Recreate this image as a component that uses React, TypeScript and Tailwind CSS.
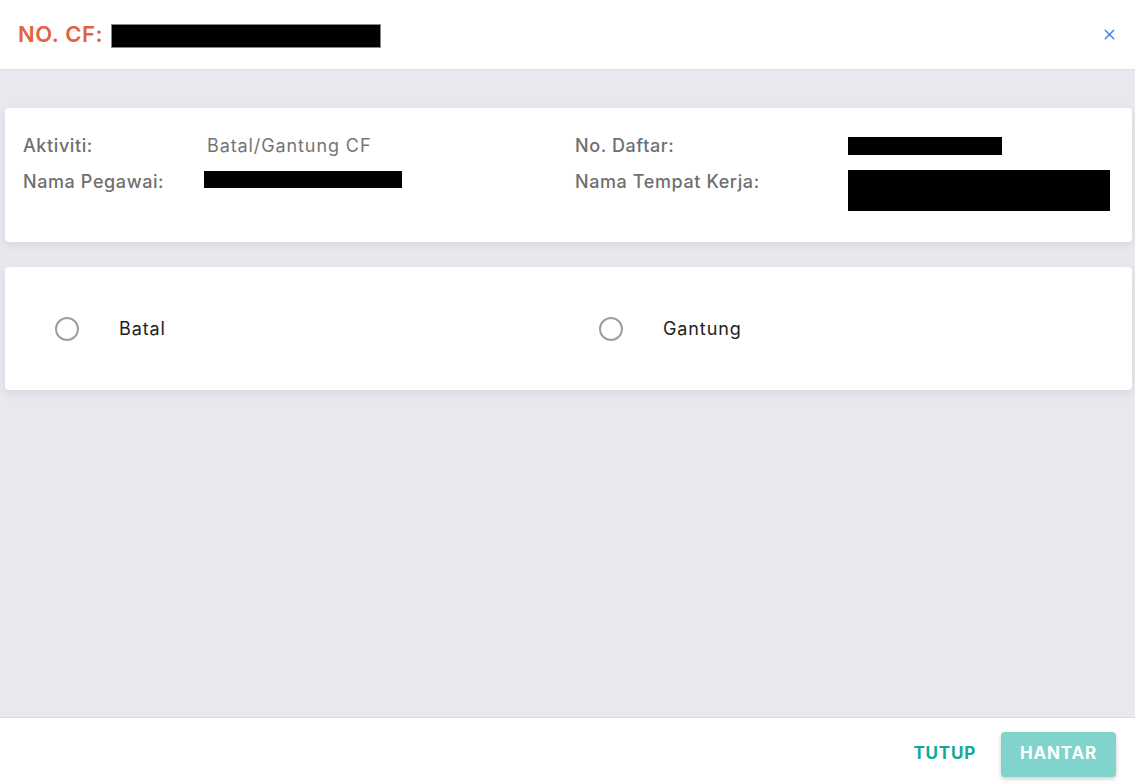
import { X } from "lucide-react";

const font = { fontFamily: 'Inter, "Noto Sans", "Liberation Sans", sans-serif' };

function Redacted({ className }: { className: string }) {
  return <span className={`block bg-black ${className}`} />;
}

function Label({ width, children }: { width: string; children: React.ReactNode }) {
  return (
    <div className={`shrink-0 text-[18px] font-medium leading-[24px] tracking-[0.6px] text-[#6f6f6f] ${width}`}>
      {children}
    </div>
  );
}

function Radio({ label }: { label: string }) {
  return (
    <label className="flex items-center">
      <span className="block h-[24px] w-[24px] rounded-full border-2 border-[#9e9e9e]" />
      <span className="ml-[40px] text-[18px] leading-[24px] tracking-[0.9px] text-[#212121]">{label}</span>
    </label>
  );
}

export default function App() {
  return (
    <div className="flex h-[782px] w-[1135px] flex-col bg-white" style={font}>
      {/* Header */}
      <div className="flex h-[70px] shrink-0 items-center justify-between border-b border-[#e0e0e0] pl-[18px] pr-[17px]">
        <div className="flex items-center">
          <span className="text-[22px] font-semibold tracking-[0.6px] text-[#e5623f]">NO. CF:</span>
          <Redacted className="ml-[8px] mt-[2px] h-[24px] w-[270px] border border-[#888]" />
        </div>
        <X className="h-[17px] w-[17px] text-[#3b82f6]" strokeWidth={2} />
      </div>

      {/* Body */}
      <div className="flex flex-1 flex-col gap-[25px] bg-[#e8e9ee] pl-[5px] pr-[3px] pt-[38px]">
        <div className="grid h-[134px] grid-cols-[552px_1fr] rounded-[4px] bg-white pl-[18px] pt-[26px] shadow-[0_3px_10px_rgba(0,0,0,0.08)]">
          <div className="flex flex-col gap-[12px]">
            <div className="flex items-start">
              <Label width="w-[184px]">Aktiviti:</Label>
              <span className="text-[18px] leading-[24px] tracking-[0.9px] text-[#757575]">Batal/Gantung CF</span>
            </div>
            <div className="flex items-start">
              <Label width="w-[181px]">Nama Pegawai:</Label>
              <Redacted className="mt-[1px] h-[17px] w-[198px]" />
            </div>
          </div>
          <div className="flex flex-col gap-[12px]">
            <div className="flex items-start">
              <Label width="w-[273px]">No. Daftar:</Label>
              <Redacted className="mt-[3px] h-[18px] w-[154px]" />
            </div>
            <div className="flex items-start">
              <Label width="w-[273px]">Nama Tempat Kerja:</Label>
              <Redacted className="h-[41px] w-[262px]" />
            </div>
          </div>
        </div>

        <div className="grid h-[123px] grid-cols-[544px_1fr] items-center rounded-[4px] bg-white pl-[50px] shadow-[0_3px_10px_rgba(0,0,0,0.08)]">
          <Radio label="Batal" />
          <Radio label="Gantung" />
        </div>
      </div>

      {/* Footer */}
      <div className="flex h-[65px] shrink-0 items-center justify-end gap-[25px] border-t border-[#dcdcdc] pr-[19px] pt-[8px]">
        <button className="text-[17px] font-bold tracking-[0.8px] text-[#14a898]">TUTUP</button>
        <button className="h-[45px] w-[115px] rounded-[4px] bg-[#80d4cc] text-[17px] font-bold tracking-[0.8px] text-white shadow-[0_2px_4px_rgba(0,0,0,0.2)]">
          HANTAR
        </button>
      </div>
    </div>
  );
}
